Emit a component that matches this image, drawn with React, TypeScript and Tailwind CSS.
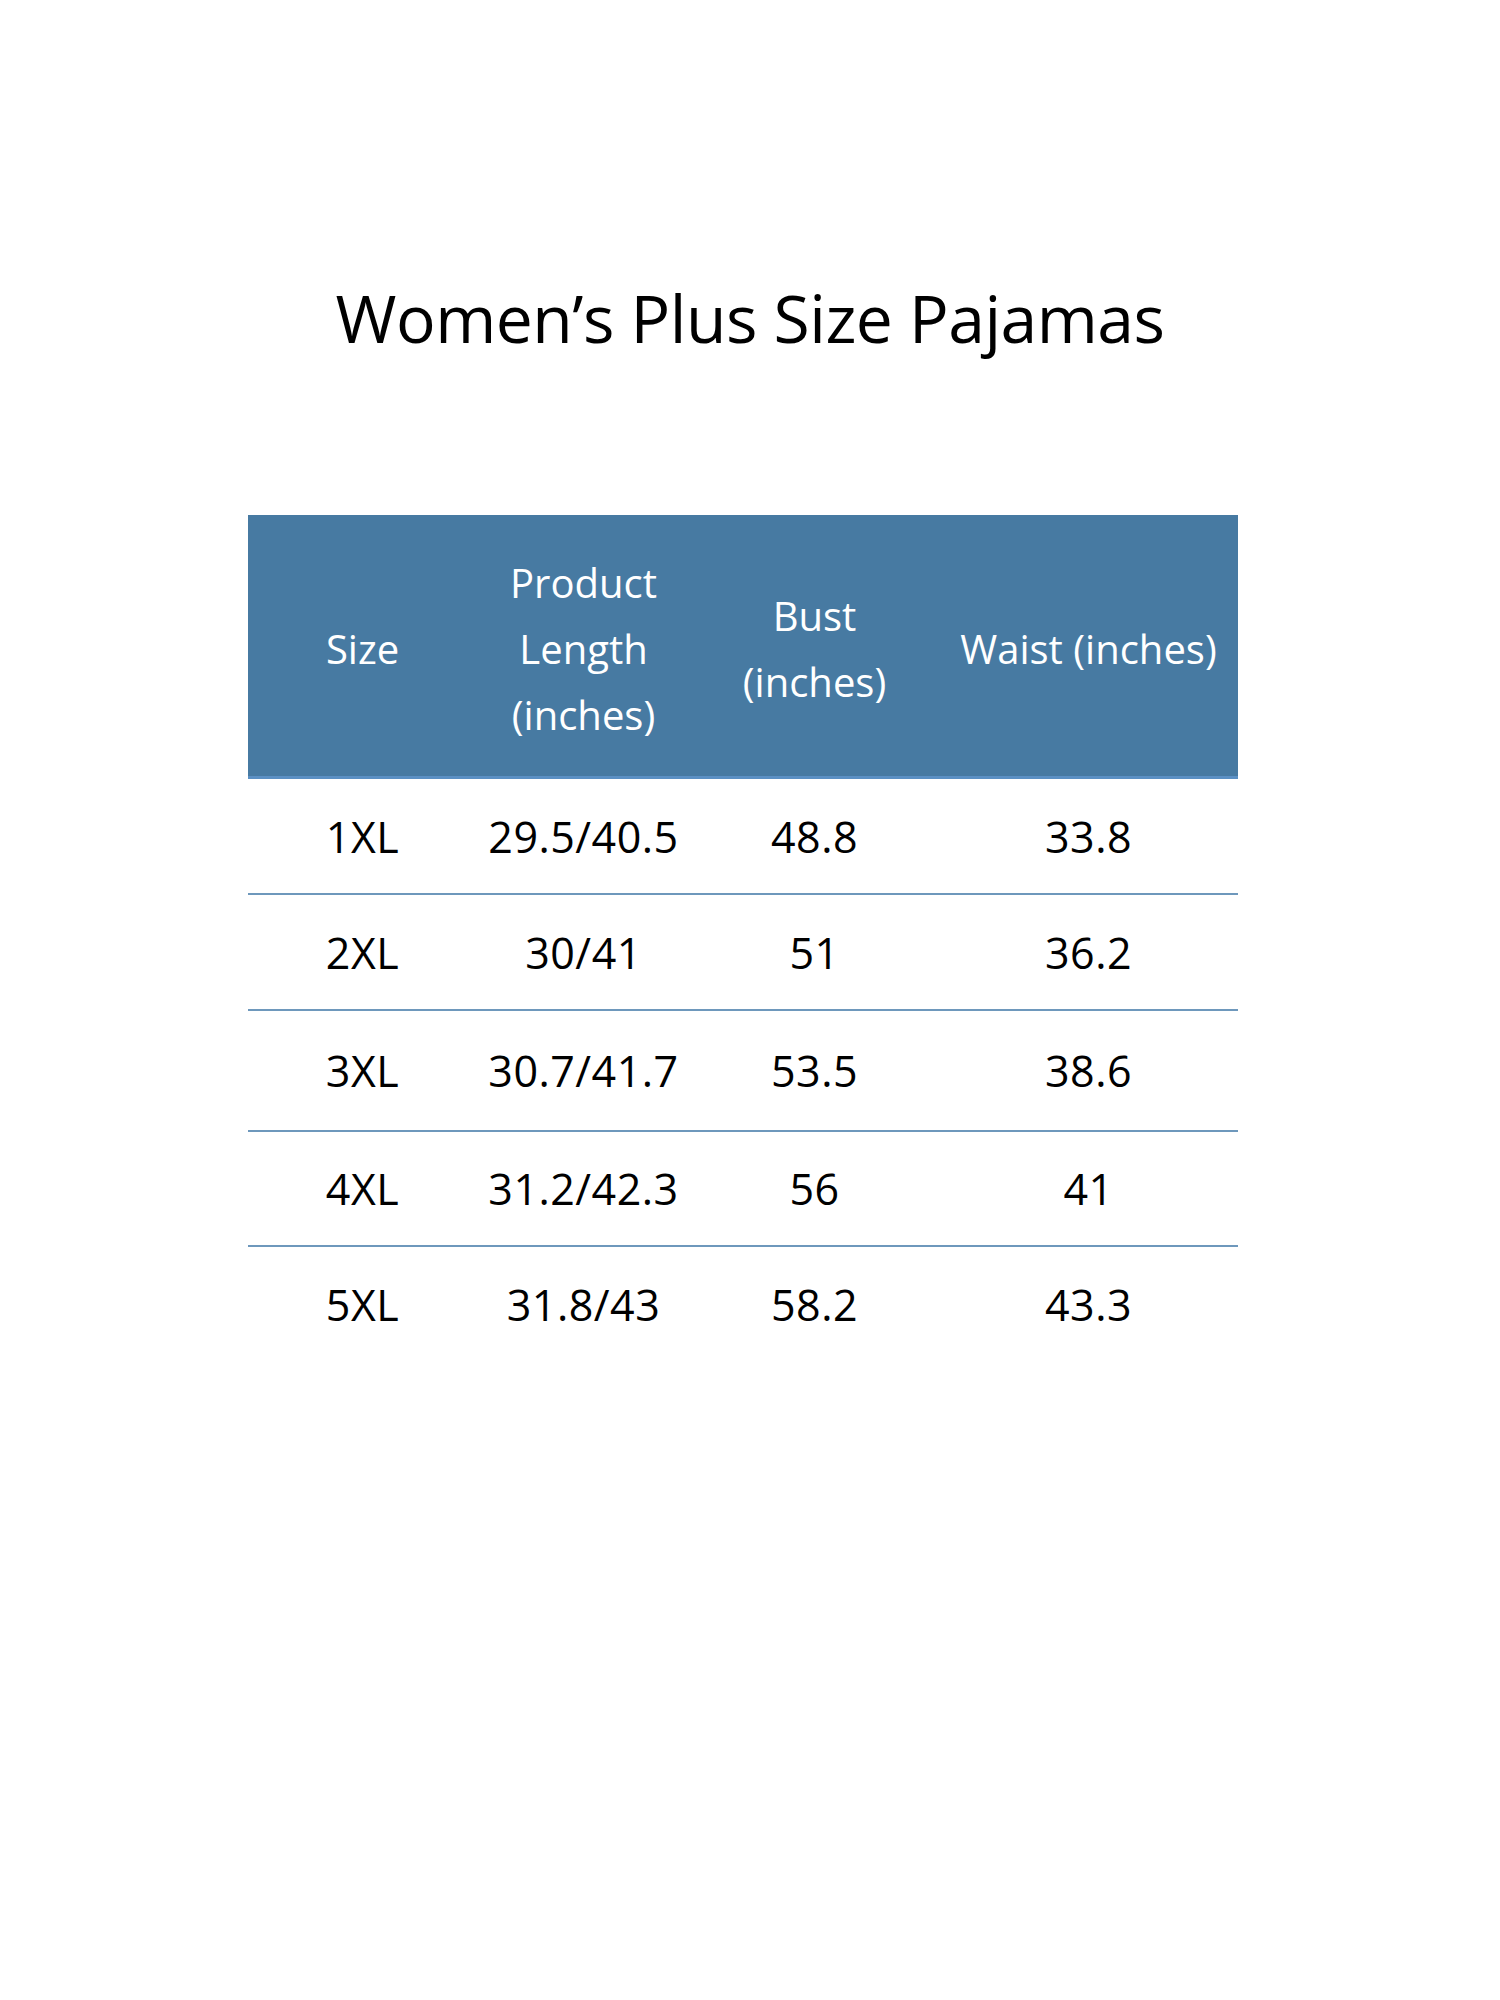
const COLS = "grid grid-cols-[229px_213px_249px_299px]"

const ROWS = [
  { size: "1XL", length: "29.5/40.5", bust: "48.8", waist: "33.8", h: "h-[116px]" },
  { size: "2XL", length: "30/41", bust: "51", waist: "36.2", h: "h-[116px]" },
  { size: "3XL", length: "30.7/41.7", bust: "53.5", waist: "38.6", h: "h-[121px]" },
  { size: "4XL", length: "31.2/42.3", bust: "56", waist: "41", h: "h-[115px]" },
  { size: "5XL", length: "31.8/43", bust: "58.2", waist: "43.3", h: "h-[114px]" },
]

function HeaderCell({ lines }: { lines: string[] }) {
  return (
    <div className="flex flex-col items-center justify-center pt-[7px] text-center">
      {lines.map((l) => (
        <span key={l} className="block leading-[66px] whitespace-nowrap">
          {l}
        </span>
      ))}
    </div>
  )
}

export default function App() {
  return (
    <div className="min-h-[2000px] w-[1500px] bg-white font-['Open_Sans',sans-serif] text-black">
      <h1 className="pt-[284px] text-center text-[66px] leading-none font-normal tracking-[-0.5px]">
        Women’s Plus Size Pajamas
      </h1>

      <div className="mt-[165px] ml-[248px] w-[990px]">
        <div className={`${COLS} h-[264px] border-b-[3px] border-[#5b90c4] bg-[#477aa2] text-[40px] text-white`}>
          <HeaderCell lines={["Size"]} />
          <HeaderCell lines={["Product", "Length", "(inches)"]} />
          <HeaderCell lines={["Bust", "(inches)"]} />
          <HeaderCell lines={["Waist (inches)"]} />
        </div>

        {ROWS.map((r, i) => (
          <div
            key={r.size}
            className={`${COLS} ${r.h} items-center pt-[2px] text-center text-[43px] tracking-[0.5px] ${
              i < ROWS.length - 1 ? "border-b-2 border-[#6e98bc]" : ""
            }`}
          >
            <span>{r.size}</span>
            <span>{r.length}</span>
            <span>{r.bust}</span>
            <span>{r.waist}</span>
          </div>
        ))}
      </div>
    </div>
  )
}
